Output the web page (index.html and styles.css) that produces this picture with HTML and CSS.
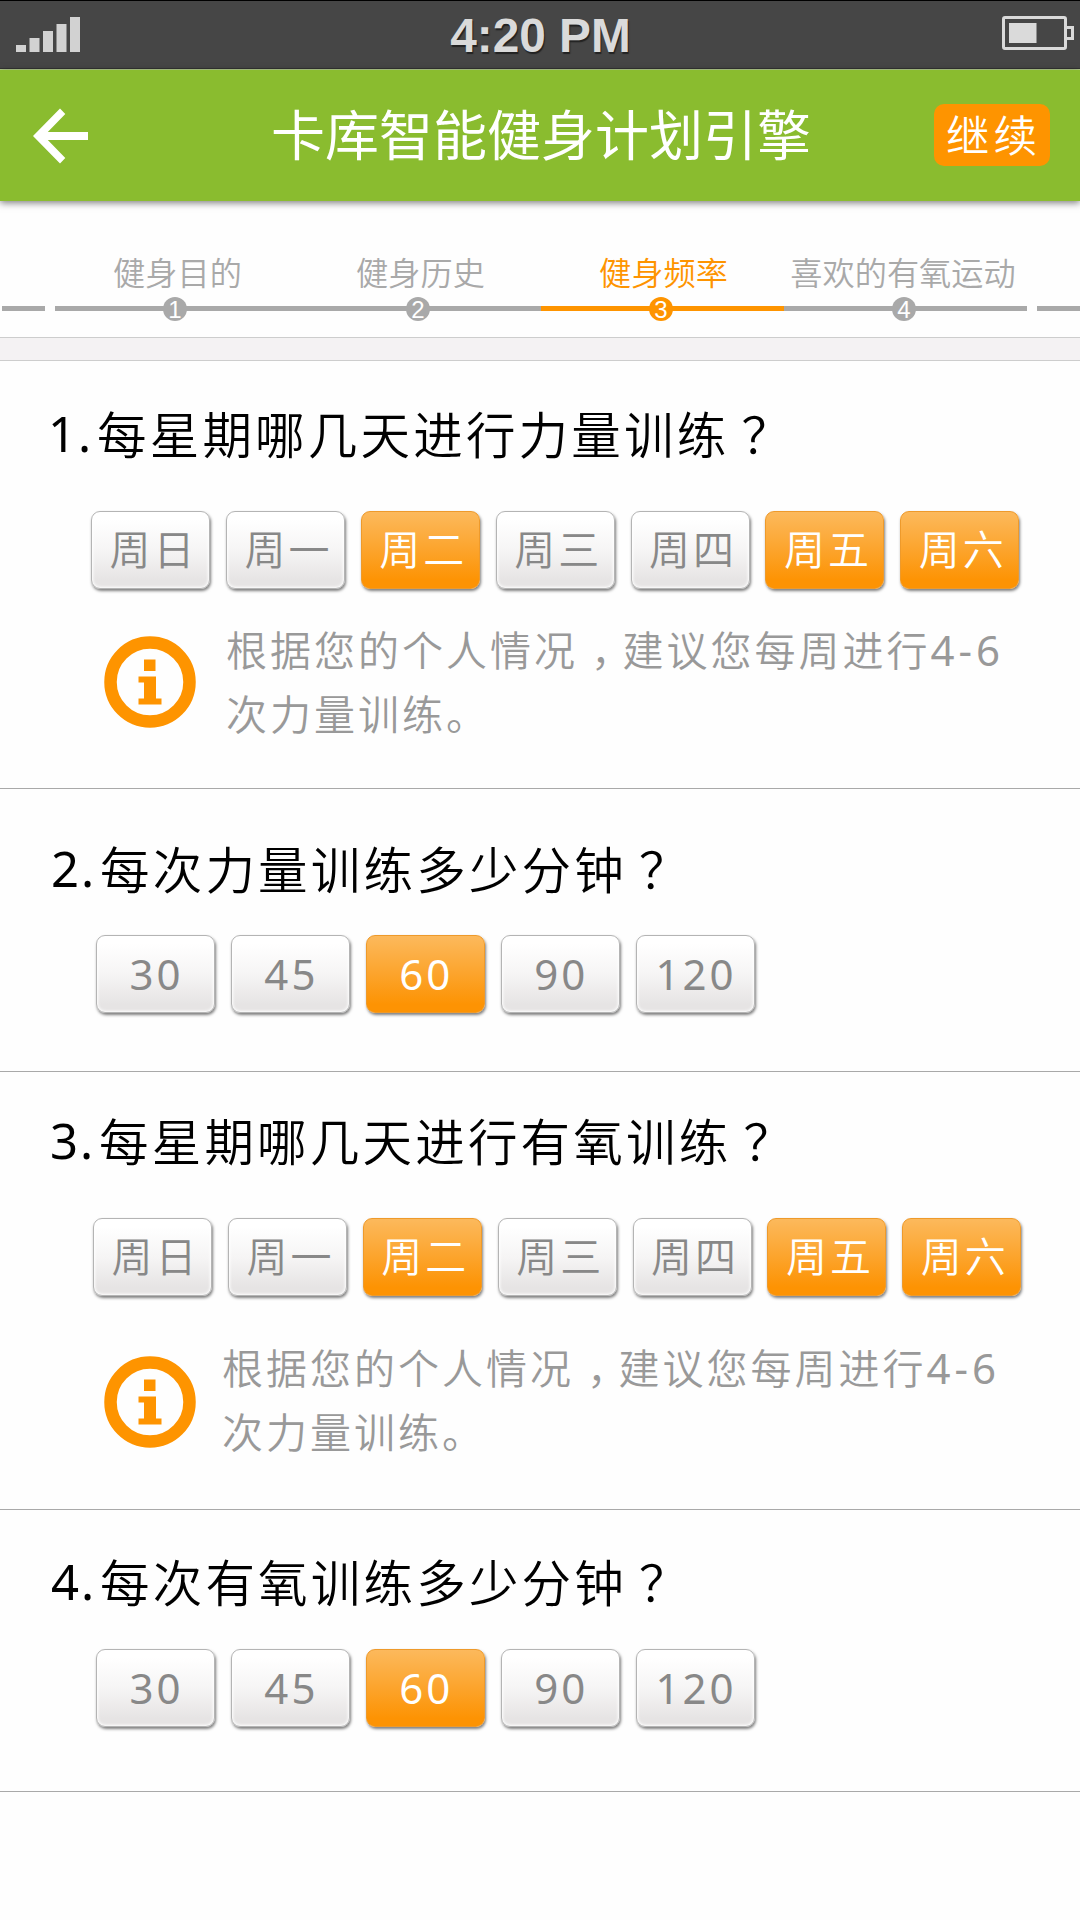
FILE: index.html
```html
<!DOCTYPE html>
<html lang="zh-CN">
<head>
<meta charset="utf-8">
<title>卡库智能健身计划引擎</title>
<link rel="stylesheet" href="styles.css">
</head>
<body>
<div class="status">
  <svg class="signal" width="65" height="35" viewBox="0 0 65 35"><path d="M0 28h10v7H0zM13.5 21h10v14h-10zM27 14h10v21H27zM40.5 7h10v28h-10zM54 0h10v35H54z"/></svg>
  <span class="time">4:20 PM</span>
  <svg class="battery" width="72" height="34" viewBox="0 0 72 34"><rect x="1.500" y="1.500" width="62" height="31" rx="1.500"/><path d="M65 11.500h5.500v11H65"/><path class="charge" d="M7 7h27.500v20h-27.500z"/></svg>
</div>
<header class="header">
  <svg class="back" width="56" height="56" viewBox="0 0 56 56"><path d="M0 28 27 0.500l5.300 5.500-17.500 18H55v8H14.800l17.500 18-5.300 5.500z"/></svg>
  <h1 class="title">卡库智能健身计划引擎</h1>
  <button class="next">继续</button>
</header>
<nav class="steps">
  <span class="stub"></span>
  <ol class="track">
    <li class="step"><span class="label">健身目的</span><span class="rail"><b class="dot">1</b></span></li>
    <li class="step"><span class="label">健身历史</span><span class="rail"><b class="dot">2</b></span></li>
    <li class="step current"><span class="label">健身频率</span><span class="rail"><b class="dot">3</b></span></li>
    <li class="step"><span class="label wide">喜欢的有氧运动</span><span class="rail"><b class="dot">4</b></span></li>
  </ol>
  <span class="stub"></span>
</nav>
<div class="strip"></div>
<main>
  <section class="question q1">
    <h2 class="ask"><span class="num">1.</span>每星期哪几天进行力量训练<span class="mark">？</span></h2>
    <div class="options">
      <button class="opt">周日</button><button class="opt">周一</button><button class="opt on">周二</button><button class="opt">周三</button><button class="opt">周四</button><button class="opt on">周五</button><button class="opt on">周六</button>
    </div>
    <div class="hint">
      <svg class="info" width="92" height="92" viewBox="0 0 92 92"><circle cx="46" cy="46" r="39.500"/><path d="M40 23.500h11.500v11.500H40zM34.500 40.500h17.500v22h5.500v6H34.500v-6h5.500V46.500h-5.500z"/></svg>
      <p class="tip">根据您的个人情况<span class="comma">，</span>建议您每周进行<span class="digits">4-6</span><br>次力量训练。</p>
    </div>
  </section>
  <section class="question q2">
    <h2 class="ask"><span class="num">2.</span>每次力量训练多少分钟<span class="mark">？</span></h2>
    <div class="options">
      <button class="opt n">30</button><button class="opt n">45</button><button class="opt n on">60</button><button class="opt n">90</button><button class="opt n">120</button>
    </div>
  </section>
  <section class="question q3">
    <h2 class="ask"><span class="num">3.</span>每星期哪几天进行有氧训练<span class="mark">？</span></h2>
    <div class="options">
      <button class="opt">周日</button><button class="opt">周一</button><button class="opt on">周二</button><button class="opt">周三</button><button class="opt">周四</button><button class="opt on">周五</button><button class="opt on">周六</button>
    </div>
    <div class="hint">
      <svg class="info" width="92" height="92" viewBox="0 0 92 92"><circle cx="46" cy="46" r="39.500"/><path d="M40 23.500h11.500v11.500H40zM34.500 40.500h17.500v22h5.500v6H34.500v-6h5.500V46.500h-5.500z"/></svg>
      <p class="tip">根据您的个人情况<span class="comma">，</span>建议您每周进行<span class="digits">4-6</span><br>次力量训练。</p>
    </div>
  </section>
  <section class="question q4">
    <h2 class="ask"><span class="num">4.</span>每次有氧训练多少分钟<span class="mark">？</span></h2>
    <div class="options">
      <button class="opt n">30</button><button class="opt n">45</button><button class="opt n on">60</button><button class="opt n">90</button><button class="opt n">120</button>
    </div>
  </section>
</main>
</body>
</html>
```
FILE: styles.css
```css
* { box-sizing: border-box; margin: 0; padding: 0; }
body {
  width: 1080px;
  height: 1920px;
  overflow: hidden;
  background: #fefefe;
  font-family: "Noto Sans CJK SC", sans-serif;
  font-weight: 350;
}
button { font: inherit; border: 0; }
svg { display: block; }

.status {
  height: 70px;
  padding: 15px 6px 0 16px;
  display: grid;
  grid-template-columns: 1fr auto 1fr;
  align-items: start;
  background: #464646;
  border-top: 1px solid #000;
  border-bottom: 1px solid #b5cf8c;
  box-shadow: inset 0 -1px #333;
}
.signal { fill: #d2d2d2; margin-top: 1px; }
.time {
  margin-right: 9px;
  padding-top: 1px;
  font: bold 47.800px/38px "Liberation Sans", Arial, sans-serif;
  color: #dadada;
  text-shadow: 1px 2px 1px #222;
}
.battery { justify-self: end; fill: none; stroke: #dadada; stroke-width: 3; }
.battery .charge { fill: #dadada; stroke: none; }

.header {
  position: relative;
  height: 131px;
  padding: 0 30px 0 33px;
  display: flex;
  align-items: center;
  background: #8abc2f;
  color: #fff;
  box-shadow: 0 2px 7px rgba(0, 0, 0, .5);
}
.back { fill: #fff; }
.title {
  margin: 0 auto 6px 182px;
  font-size: 54px;
  line-height: 80px;
  font-weight: 400;
}
.next {
  width: 116px;
  height: 62px;
  margin-bottom: 1px;
  border-radius: 10px;
  background: #fe9400;
  color: #fff;
  font-size: 43.500px;
  line-height: 54px;
  letter-spacing: 4px;
  padding: 0 0 3px 3px;
}

.steps {
  height: 136px;
  padding-left: 2px;
  display: flex;
  gap: 10px;
}
.stub { width: 43px; height: 5px; margin-top: 105px; background: #a9a9a9; }
.track { width: 973px; display: flex; list-style: none; }
.step {
  flex: 1;
  display: flex;
  flex-direction: column;
  align-items: center;
  color: #a9a9a9;
}
.label {
  height: 105px;
  padding: 46px 0 0 2px;
  font-size: 32.200px;
  line-height: 48px;
  white-space: nowrap;
}
.wide { margin-left: -7px; }
.rail {
  width: 100%;
  height: 5px;
  padding-right: 3px;
  display: flex;
  align-items: center;
  justify-content: center;
  background: currentColor;
}
.dot {
  flex: none;
  width: 24px;
  height: 24px;
  margin-top: 1px;
  border-radius: 50%;
  background: #a9a9a9;
  font: 24px/25px "Liberation Sans", Arial, sans-serif;
  text-align: center;
  color: #fff;
}
.current { color: #fe9400; }
.current .dot { background: #fe9400; }

.strip {
  height: 24px;
  background: #f4f2f3;
  border-top: 1px solid #cdcdcd;
  border-bottom: 1px solid #cdcdcd;
}

.question { border-bottom: 1px solid #a9a9a9; }
.ask {
  height: 72px;
  display: flex;
  font-size: 49.500px;
  line-height: 74px;
  font-weight: 350;
  letter-spacing: 3.200px;
  color: #000;
}
.num {
  width: 49px;
  margin-left: -2px;
  font-family: "Noto Sans", sans-serif;
  font-weight: 400;
  font-size: 49px;
  letter-spacing: 2px;
}
.mark { margin-left: 12px; }
.options { display: flex; gap: 15.900px; }
.opt {
  width: 119px;
  height: 78px;
  padding: 0 0 6px 6px;
  border: 1px solid #b4b4b4;
  border-radius: 9px;
  background: linear-gradient(#fff 10%, #f6f5f5 50%, #e6e4e4 90%);
  box-shadow: 1px 2px 3px rgba(0, 0, 0, .5), inset 0 0 3px 1px #fff;
  color: #888;
  font-size: 41px;
  line-height: 60px;
  letter-spacing: 3px;
}
.n {
  padding: 0 0 1px 2px;
  font-family: "Noto Sans", sans-serif;
  font-weight: 400;
  font-size: 42px;
}
.on {
  background: linear-gradient(#fcb95c, #fca42c 50%, #fd9303 90%);
  border-color: #ee9a2b;
  box-shadow: 1px 2px 3px rgba(0, 0, 0, .5);
  color: #fff;
}
.hint { display: flex; padding-left: 104px; }
.info { fill: #fe9400; }
.info circle { fill: none; stroke: #fe9400; stroke-width: 12.500; }
.tip {
  font-size: 41px;
  line-height: 64px;
  letter-spacing: 3px;
  color: #999;
  white-space: nowrap;
}
.comma {
  margin: 0 8px 0 13px;
  font-feature-settings: "halt";
}
.digits {
  font-family: "Noto Sans", sans-serif;
  font-weight: 400;
  font-size: 42px;
  line-height: 1;
  letter-spacing: 4px;
}

.q1 { height: 428px; padding-top: 35px; }
.q1 .ask { padding-left: 50px; }
.q1 .options { padding: 43px 0 0 91px; }
.q1 .info { margin-top: 47px; }
.q1 .tip { margin: 27px 0 0 30px; }

.q2 { height: 283px; padding-top: 42px; }
.q2 .ask { padding-left: 53px; }
.q2 .options { padding: 32px 0 0 96px; }

.q3 { height: 438px; padding-top: 31px; }
.q3 .ask { padding-left: 52px; }
.q3 .options { padding: 43px 0 0 93px; }
.q3 .info { margin-top: 60px; }
.q3 .tip { margin: 38px 0 0 26px; }

.q4 { height: 282px; padding-top: 34px; }
.q4 .ask { padding-left: 53px; }
.q4 .options { padding: 33px 0 0 96px; }
```
